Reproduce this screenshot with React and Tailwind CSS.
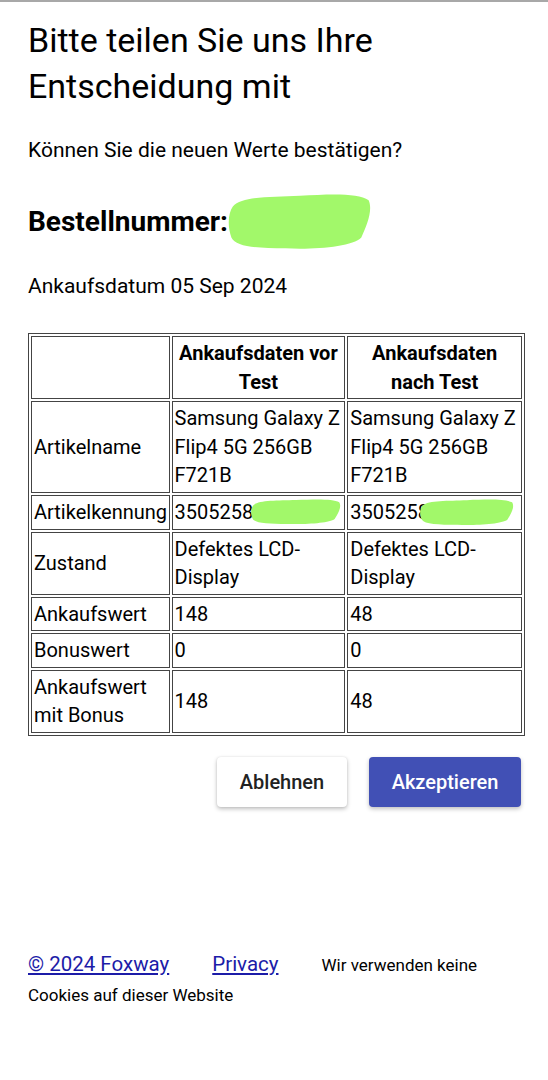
const GREEN = '#a2f86a';

function Scribble({ className }) {
  return (
    <svg className={className} viewBox="0 0 100 40" preserveAspectRatio="none">
      <path
        d="M4 10 C 10 3, 30 4, 50 3 C 70 2, 90 1, 97 6 C 100 12, 96 22, 92 30 C 86 36, 60 38, 40 37 C 20 37, 6 36, 3 30 C 0 22, 1 14, 4 10 Z"
        fill={GREEN}
      />
    </svg>
  );
}

function Cell({ children, head, className = '' }) {
  const Tag = head ? 'th' : 'td';
  return (
    <Tag
      className={`border border-[#444] px-[2px] py-[2px] align-middle ${
        head ? 'text-center font-bold' : 'text-left font-normal'
      } ${className}`}
    >
      {children}
    </Tag>
  );
}

export default function App() {
  const rows = [
    ['Artikelname', 'Samsung Galaxy Z Flip4 5G 256GB F721B', 'Samsung Galaxy Z Flip4 5G 256GB F721B'],
    ['Artikelkennung', 'id', 'id'],
    ['Zustand', 'Defektes LCD-Display', 'Defektes LCD-Display'],
    ['Ankaufswert', '148', '48'],
    ['Bonuswert', '0', '0'],
    ['Ankaufswert mit Bonus', '148', '48'],
  ];

  return (
    <div className="min-h-[1080px] bg-white text-black font-['Roboto',sans-serif]">
      <div className="h-[2px] bg-[#a8a8a8]" />

      <div className="px-[28px]">
        <h1 className="mt-[15px] text-[34px] leading-[46px] font-normal">
          Bitte teilen Sie uns Ihre Entscheidung mit
        </h1>

        <p className="mt-[26px] text-[21px] leading-[30px]">
          Können Sie die neuen Werte bestätigen?
        </p>

        {/* Order number */}
        <div className="mt-[26px] flex items-center">
          <h2 className="text-[28px] leading-[36px] font-bold">Bestellnummer:</h2>
          <Scribble className="w-[146px] h-[62px] -ml-[1px]" />
        </div>

        <p className="mt-[18px] text-[21px] leading-[30px]">Ankaufsdatum 05 Sep 2024</p>

        {/* Comparison table */}
        <table className="mt-[32px] w-[497px] border border-[#444] border-separate border-spacing-[2px] text-[20px] leading-[28.5px] table-fixed">
          <colgroup>
            <col className="w-[138px]" />
            <col className="w-[173px]" />
            <col className="w-[174px]" />
          </colgroup>
          <thead>
            <tr>
              <Cell head />
              <Cell head>Ankaufsdaten vor Test</Cell>
              <Cell head>Ankaufsdaten nach Test</Cell>
            </tr>
          </thead>
          <tbody>
            {rows.map(([label, before, after]) => (
              <tr key={label}>
                <Cell>{label}</Cell>
                {label === 'Artikelkennung' ? (
                  <>
                    <Cell>
                      <div className="flex items-center">
                        <span>3505258</span>
                        <Scribble className="w-[92px] h-[28px] -ml-[3px]" />
                      </div>
                    </Cell>
                    <Cell>
                      <div className="flex items-center overflow-hidden">
                        <span className="shrink-0">3505258</span>
                        <Scribble className="w-[96px] h-[29px] shrink-0 -ml-[10px]" />
                      </div>
                    </Cell>
                  </>
                ) : (
                  <>
                    <Cell>{before}</Cell>
                    <Cell>{after}</Cell>
                  </>
                )}
              </tr>
            ))}
          </tbody>
        </table>

        {/* Actions */}
        <div className="mt-[21px] -mr-[1px] flex justify-end gap-[22px]">
          <button className="w-[130px] h-[50px] rounded-[4px] bg-white text-[20px] font-medium text-[#222] shadow-[0_2px_4px_rgba(0,0,0,0.25),0_0_2px_rgba(0,0,0,0.1)]">
            Ablehnen
          </button>
          <button className="w-[152px] h-[50px] rounded-[4px] bg-[#4150b5] text-[20px] font-medium text-white shadow-[0_2px_4px_rgba(0,0,0,0.25)]">
            Akzeptieren
          </button>
        </div>

        {/* Footer */}
        <footer className="mt-[142px] text-[17px] leading-[30px]">
          <a href="#" className="text-[20.5px] leading-[30px] text-[#1c1ca8] underline mr-[43px]">© 2024 Foxway</a>
          <a href="#" className="text-[20.5px] leading-[30px] text-[#1c1ca8] underline mr-[43px]">Privacy</a>
          <span>Wir verwenden keine Cookies auf dieser Website</span>
        </footer>
      </div>
    </div>
  );
}
